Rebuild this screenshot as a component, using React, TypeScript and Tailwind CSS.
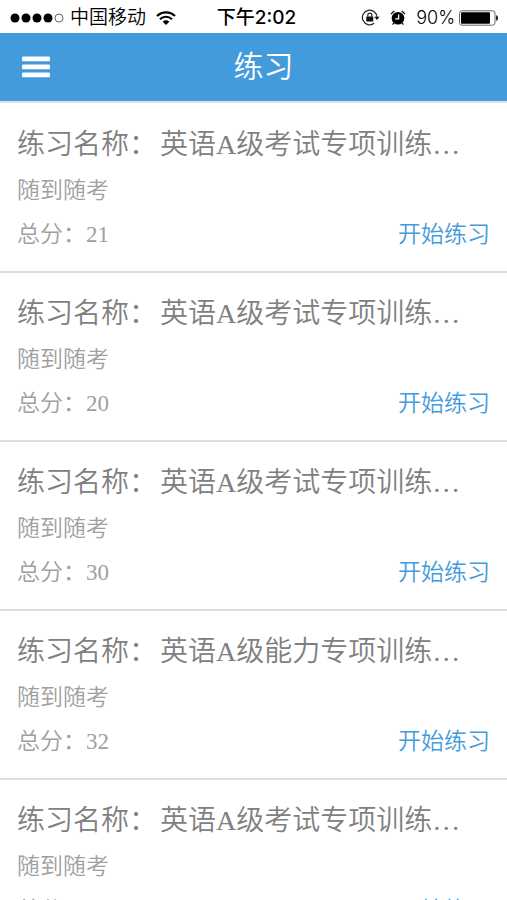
type Exercise = { id: number; name: string; mode: string; score: number };

const exercises: Exercise[] = [
  { id: 1, name: "英语A级考试专项训练…", mode: "随到随考", score: 21 },
  { id: 2, name: "英语A级考试专项训练…", mode: "随到随考", score: 20 },
  { id: 3, name: "英语A级考试专项训练…", mode: "随到随考", score: 30 },
  { id: 4, name: "英语A级能力专项训练…", mode: "随到随考", score: 32 },
  { id: 5, name: "英语A级考试专项训练…", mode: "随到随考", score: 30 },
];

function SignalDots() {
  return (
    <svg width="54" height="10" viewBox="0 0 54 10" aria-hidden="true">
      <circle cx="5" cy="5" r="4.5" />
      <circle cx="16" cy="5" r="4.5" />
      <circle cx="27" cy="5" r="4.5" />
      <circle cx="38" cy="5" r="4.5" />
      <circle cx="49" cy="5" r="4" fill="none" stroke="#555" strokeWidth="0.9" />
    </svg>
  );
}

function WifiIcon() {
  return (
    <svg width="20" height="14" viewBox="0 0 20 14" fill="none" stroke="#000" strokeWidth="2.1" aria-hidden="true">
      <path d="M1 5.1C6 .1 14 .1 19 5.1" />
      <path d="M4 8.3C7.4 4.9 12.6 4.9 16 8.3" />
      <path d="M6.7 10.7C8.6 8.9 11.4 8.9 13.3 10.7L10 14Z" fill="#000" stroke="none" />
    </svg>
  );
}

function RotationLockIcon() {
  return (
    <svg width="19" height="17" viewBox="0 0 19 17" fill="none" stroke="#222" aria-hidden="true">
      <path d="M16 8.5A7.3 7.3 0 1 0 13.2 14.2" strokeWidth="1.2" />
      <path d="M13.2 7.8H18.6L15.9 11Z" fill="#111" stroke="none" />
      <rect x="5.3" y="7.5" width="7" height="5" rx="0.5" fill="#111" stroke="none" />
      <path d="M6.8 7.8V6.2a2 2 0 0 1 4 0V7.8" strokeWidth="1.2" />
    </svg>
  );
}

function AlarmIcon() {
  return (
    <svg width="16" height="16" viewBox="0 0 16 16" aria-hidden="true">
      <circle cx="8" cy="8.3" r="6.3" />
      <path d="M1 4.2A9 9 0 0 1 4.4 1.1M15 4.2A9 9 0 0 0 11.6 1.1" fill="none" stroke="#111" strokeWidth="1.3" />
      <path d="M3.8 12.8L2.6 14.6M12.2 12.8L13.4 14.6" stroke="#111" strokeWidth="1.3" />
      <path d="M8.6 4.6V8.9H5.2" fill="none" stroke="#fff" strokeWidth="1.3" />
    </svg>
  );
}

function BatteryIcon() {
  return (
    <svg width="40" height="16" viewBox="0 0 40 16" aria-hidden="true">
      <rect x="0.5" y="0.8" width="35.5" height="14.4" rx="2.5" fill="#fff" stroke="#666" />
      <rect x="2" y="2.2" width="29" height="11.6" rx="1" />
      <path d="M37.2 5.2C39.6 5.6 39.6 10.4 37.2 10.8Z" />
    </svg>
  );
}

function StatusBar() {
  return (
    <div className="grid h-[33px] shrink-0 grid-cols-[1fr_auto_1fr] items-center bg-white pt-0.5 pr-2 pl-2.5 font-['Inter','Noto_Sans_CJK_SC',sans-serif] text-black">
      <div className="flex items-center">
        <SignalDots />
        <span className="mr-2.5 ml-1.5 text-[19px] leading-6">中国移动</span>
        <WifiIcon />
      </div>
      <span className="pl-1 text-[19px] leading-6 font-medium">下午2:02</span>
      <div className="flex items-center justify-end">
        <RotationLockIcon />
        <span className="ml-2.5">
          <AlarmIcon />
        </span>
        <span className="mr-1 ml-2.5 text-[18px] leading-6">90%</span>
        <BatteryIcon />
      </div>
    </div>
  );
}

function Header() {
  return (
    <header className="flex h-[70px] shrink-0 items-center border-b-2 border-[#dce3e8] bg-[#439bdc] pr-8 pl-5">
      <button type="button" aria-label="菜单" className="flex h-10 w-8 items-center justify-center">
        <svg width="30" height="22" viewBox="0 0 30 22" fill="#fff" aria-hidden="true">
          <rect x="1" y="0.5" width="28" height="4.8" rx="1.2" />
          <rect x="1" y="8.5" width="28" height="4.8" rx="1.2" />
          <rect x="1" y="16.5" width="28" height="4.8" rx="1.2" />
        </svg>
      </button>
      <h1 className="flex-1 text-center text-[30px] leading-10 font-[350] text-white">练习</h1>
    </header>
  );
}

function ExerciseRow({ exercise }: { exercise: Exercise }) {
  return (
    <li className="border-b-2 border-[#dedede] px-[17px] pt-[21px] pb-3.5">
      <h2 className="flex gap-[3px] text-[28px] leading-10 font-[350] text-[#808080]">
        <span className="shrink-0">练习名称：</span>
        <span className="min-w-0 truncate">{exercise.name}</span>
      </h2>
      <p className="mt-1 text-[23px] leading-11 text-[#a0a0a0]">{exercise.mode}</p>
      <div className="flex items-center justify-between text-[23px] leading-11">
        <span className="text-[#a0a0a0]">总分：{exercise.score}</span>
        <a href={`#exercise-${exercise.id}`} className="text-[#439bdc]">
          开始练习
        </a>
      </div>
    </li>
  );
}

export default function App() {
  return (
    <div className="flex h-screen flex-col bg-white font-['Liberation_Serif','Noto_Sans_CJK_SC',serif] font-[350]">
      <StatusBar />
      <Header />
      <main className="min-h-0 flex-1 overflow-y-auto pt-px [scrollbar-width:none]">
        <ul>
          {exercises.map((exercise) => (
            <ExerciseRow key={exercise.id} exercise={exercise} />
          ))}
        </ul>
      </main>
    </div>
  );
}
